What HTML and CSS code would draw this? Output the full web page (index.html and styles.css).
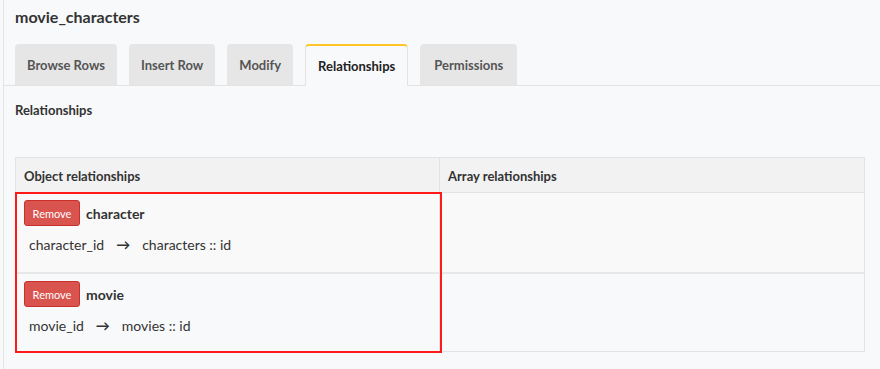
FILE: index.html
```html
<!DOCTYPE html>
<html lang="en">
   <head>
      <meta charset="UTF-8">
      <meta name="viewport" content="width=device-width, initial-scale=1.0">
      <link rel="stylesheet" href="styles.css">
      <title>movie_characters</title>
   </head>
   <body>
      <div class="page">
         <h1 class="title">movie_characters</h1>
         <div class="tabs">
            <div class="tab">Browse Rows</div>
            <div class="tab">Insert Row</div>
            <div class="tab">Modify</div>
            <div class="tab active">Relationships</div>
            <div class="tab">Permissions</div>
         </div>
         <div class="content">
            <h2 class="section">Relationships</h2>
            <div class="rel-table">
               <div class="head">Object relationships</div>
               <div class="head">Array relationships</div>
               <div class="cell">
                  <div class="rel-name"><button class="remove">Remove</button><b>character</b></div>
                  <div class="mapping">character_id<span class="arrow">&rarr;</span>characters :: id</div>
               </div>
               <div class="cell"></div>
               <div class="cell">
                  <div class="rel-name"><button class="remove">Remove</button><b>movie</b></div>
                  <div class="mapping">movie_id<span class="arrow">&rarr;</span>movies :: id</div>
               </div>
               <div class="cell"></div>
               <div class="highlight"></div>
            </div>
         </div>
      </div>
   </body>
</html>
```
FILE: styles.css
```css
body {
margin: 0;
background-color: #f8f9fa;
font-family: Lato, "Open Sans", sans-serif;
color: #333;
}
.page {
border-left: 1px solid #e3e3e3;
margin-left: 3px;
height: 369px;
}
.title {
font-size: 16px;
font-weight: bold;
margin: 0;
padding: 7px 11px 0;
height: 30px;
box-sizing: border-box;
}
.tabs {
display: flex;
gap: 12px;
padding: 14px 11px 0;
border-bottom: 1px solid #e3e3e3;
}
.tab {
background-color: #e6e6e6;
color: #555;
font-size: 13px;
font-weight: bold;
border-radius: 4px 4px 0 0;
height: 41px;
line-height: 43px;
padding: 0 12px;
box-sizing: border-box;
}
.tab:last-child {
padding: 0 14px;
}
.tab.active {
background-color: #f8f9fa;
color: #222;
border: 1px solid #e3e3e3;
border-top: 2px solid #ffc627;
border-bottom: none;
margin-bottom: -1px;
height: 42px;
line-height: 40px;
}
.content {
padding: 0 11px;
}
.section {
font-size: 13px;
font-weight: bold;
margin: 0;
padding: 16px 0 0;
height: 71px;
box-sizing: border-box;
}
.rel-table {
position: relative;
display: grid;
grid-template-columns: 424px 424px;
border: 1px solid #e3e3e3;
width: 850px;
box-sizing: border-box;
}
.head {
background-color: #f2f2f2;
font-size: 13px;
font-weight: bold;
height: 34px;
line-height: 36px;
padding: 0 8px;
border-bottom: 1px solid #e3e3e3;
}
.head:first-child {
border-right: 1px solid #e3e3e3;
}
.cell {
height: 79px;
padding: 7px 8px 0;
box-sizing: border-box;
background-color: #f9f9f9;
}
.cell:nth-of-type(5), .cell:nth-of-type(6) {
background-color: #f8f9fa;
border-top: 2px solid #e8e8e8;
}
.cell:nth-child(odd) {
border-right: 1px solid #e3e3e3;
}
.rel-name {
display: flex;
align-items: center;
gap: 6px;
font-size: 14px;
}
.remove {
background-color: #d9534f;
border: 1px solid #c9302c;
border-radius: 3px;
color: #fff;
font-family: inherit;
font-size: 11px;
height: 26px;
width: 56px;
padding: 0;
}
.mapping {
font-size: 14px;
margin-top: 10px;
padding-left: 5px;
}
.arrow {
padding: 0 12px;
font-weight: bold;
}
.highlight {
position: absolute;
left: -1px;
top: 34px;
width: 427px;
height: 161px;
border: 2px solid #ff1a1a;
box-sizing: border-box;
}
```
